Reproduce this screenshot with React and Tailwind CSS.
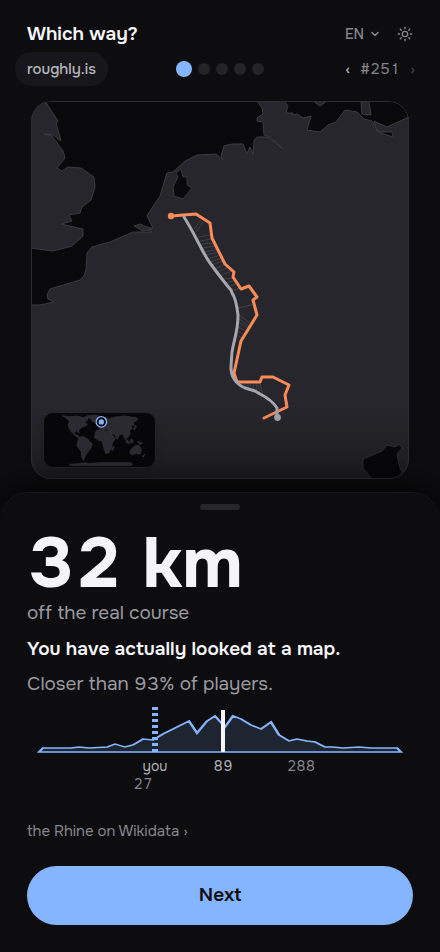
import React from 'react'
import { useState } from 'react'
import { ChevronDown, Sun } from 'lucide-react'


// land shapes of the main map, in map units (378 x 378)
const LAND = [
  // Great Britain
  "M0 0H14L27 20 25 22 30 40 22 34 13 33 21 35 32 50 34 57 26 67 31 70 37 66 50 67 63 76 64 86 60 99 51 106 49 112 38 114 41 120 30 123 52 128 52 135 41 145 22 150 0 147Z",
  // continent
  "M0 204L9 204 23 201 17 198 16 194 19 188 49 179 53 175 55 169 56 152 61 146 79 141 102 131 121 131 113 127 122 127 116 115 121 107 129 95 136 72 142 71 154 60 166 54 185 53 192 59 190 55 193 45 201 43 212 43 216 53 219 46 221 50 222 54 223 39 226 36 237 36 252 48 239 36 233 34 232 21 226 20 226 17 232 13 231 7 226 0H253L257 5 255 12 262 12 262 14 266 13 272 17 280 15 276 29 289 31 297 24 305 21 314 9 326 11 333 18 341 20 347 31 362 36 361 31 346 30 343 20 356 26 378 16V378H0Z",
  "M330 0H338L340 14 331 13Z",
  "M282 0H296L289 5Z",
]

const LAKES = [
  "M150 68L145 72 147 76 142 86 143 95 152 98 161 87 156 84 156 76 152 76Z",
  "M332 358L351 350 356 344 364 346 368 343 371 347 366 353 369 367 372 372 366 378H341L332 367Z",
  "M347 31L361 31 362 36Z",
]

const RIVER = "M153 116C164 133 171 151 179 162Q184 169 191 178T200 189L201 192Q205 197 207 214C207 231 203 238 201 251C200 265 199 270 202 276Q205 283 214 287L224 290 229 293Q241 299 246 307V317"
const GUESS = "M140 115L165 113 179 122 181 137 194 163 203 171 202 176 210 188 218 185 226 196 222 199 226 214 210 240 203 272 206 281 229 281 231 276H242L258 284 254 294 256 306 233 317"

// short lines between the guess and the real course
const GAPS = "M163 128L170 119M165 131L172 121M167 136L179 134M169 140L181 138M170 143L183 142M172 147L185 145M173 151L187 148M175 154L189 151M177 158L190 154M179 161L191 157M181 164L192 160M183 168L194 164M186 171L196 167M189 175L200 170M191 178L202 177M194 182L205 179M197 186L207 182M200 190L209 187M207 207L224 203M207 213L220 223M207 217L218 225M207 221L217 227M207 226L215 230M207 230L213 234M206 234L211 237M214 286V282M217 287V282M220 289L219 282M223 290L222 282M226 291L225 282M229 293L227 282M232 295L229 282"

const WORLD = [
  "M55 8L78 11 100 9 118 14 135 9 132 22 122 29 132 34 126 40 118 42 105 52 107 60 98 54 91 60 96 67 104 68 109 78 95 70 84 58 76 46 73 34 78 25 68 16Z",
  "M109 73L120 72 134 80 136 86 147 93 142 108 133 118 125 130 120 144 115 136 113 117 100 99 103 85Z",
  "M132 8L156 6 170 10 160 21 150 28 141 18Z",
  "M158 54L170 51 186 54 200 56 208 73 217 77 207 91 205 105 196 121 187 123 180 101 177 86 165 83 153 74Z",
  "M166 42L180 29 176 20 187 14 196 18 218 12 245 9 276 14 285 17 282 23 270 28 273 38 264 36 267 48 259 53 262 62 254 74 248 73 252 84 244 76 239 64 229 66 222 80 214 65 203 62 213 74 208 75 200 55 190 49 179 50 170 49Z",
  "M262 112L274 101 286 97 296 110 291 125 280 122 268 127 261 123Z",
  "M251 82L260 88 257 94 248 88ZM265 78L271 85 266 92 261 86ZM284 86L298 91 292 96ZM210 101L213 104 208 115 205 111ZM298 132L306 125 301 134ZM273 46L278 37 281 42 274 52Z",
  "M76 156L130 151 133 154 165 151 265 151 268 156 262 159H82Z",
]

// player distribution, [x, y] along the axis
const CURVE = [
  [6, 47], [8, 43], [22, 43], [26, 42], [31, 43], [40, 42], [44, 39], [49, 42], [53, 40], [58, 34],
  [63, 35], [68, 29], [81, 16], [85, 28], [90, 16], [94, 11], [99, 22], [103, 11], [107, 14],
  [112, 20], [117, 24], [122, 17], [126, 30], [131, 36], [135, 34], [140, 36], [144, 37],
  [149, 42], [153, 42], [158, 43], [166, 42], [172, 43], [185, 43], [187, 47],
]

const WorldInset = () => (
  <div className="absolute bottom-[11px] left-3 w-[30%] overflow-hidden rounded-[10px] border border-[#232328] bg-[#070709] shadow-lg">
    <svg viewBox="0 0 338 164" className="block w-full">
      {WORLD.map((d, index) => (
        <path key={index} d={d} fill="#2a2a30" stroke="#36363c" strokeWidth="2" />
      ))}
      <circle cx="174" cy="27" r="16" fill="#0d0d10" stroke="#85b5ff" strokeWidth="4" />
      <circle cx="174" cy="27" r="8" fill="#85b5ff" />
    </svg>
  </div>
)

const RiverMap = () => (
  <div className="relative mx-[31px] mt-[15px] overflow-hidden rounded-[20px] bg-[#09090b]">
    <svg viewBox="0 0 378 378" className="block w-full" role="img" aria-label="Map of the Rhine">
      <g fill="#26262c" stroke="#3b3b42" strokeWidth="1">
        {LAND.map((d) => <path key={d} d={d} />)}
        <path d="M103 125L109 123 121 128 112 130Z" />
      </g>
      <g fill="#09090b" stroke="#36363c" strokeWidth="1">
        {LAKES.map((d) => <path key={d} d={d} />)}
      </g>
      <path d={GAPS} stroke="#4a4a52" strokeWidth="1" fill="none" opacity="0.7" />
      <g fill="none" strokeLinecap="round" strokeLinejoin="round">
        <path d={GUESS} stroke="#fb8c58" strokeWidth="3" />
        <path d={RIVER} stroke="#a6a6af" strokeWidth="3" />
      </g>
      <circle cx="140" cy="115" r="3.2" fill="#fb8c58" />
      <circle cx="246.5" cy="316.5" r="3.4" fill="#a6a6af" />
    </svg>
    <div className="pointer-events-none absolute inset-0 rounded-[20px] border border-[#2e2e34] bg-linear-to-b from-transparent from-80% to-black/25" />
    <WorldInset />
  </div>
)

const Distribution = () => (
  <div>
    <svg viewBox="0 0 193 48" preserveAspectRatio="none" className="block h-12 w-full">
      <polygon
        points={CURVE.map((point) => point.join(',')).join(' ')}
        fill="#1e2530"
        stroke="#85b5ff"
        strokeWidth="1.4"
      />
      <line x1="64" x2="64" y1="2" y2="47" stroke="#85b5ff" strokeWidth="3" strokeDasharray="3 3" />
      <line x1="98" x2="98" y1="5" y2="47" stroke="#f5f5f8" strokeWidth="2" />
    </svg>
    {/* axis labels */}
    <div className="mt-1 grid grid-cols-[94fr_68fr_68fr_10fr_68fr_78fr] text-center text-sm leading-[18px] tabular-nums text-[#85858c]">
      <span className="col-start-2 text-[#b4b4ba]">you</span>
      <span className="col-start-3 text-[#b4b4ba]">89</span>
      <span className="col-start-5">288</span>
      <span className="col-start-2 pr-6">27</span>
    </div>
  </div>
)

const App = () => {
  const [lang, setLang] = useState('EN')

  return (
    <div className="flex min-h-screen flex-col bg-[#0d0d0f] font-['Onest','Inter',sans-serif] text-[#f5f5f8]">
      {/* header */}
      <header className="px-[27px] pt-4">
        <div className="flex h-9 items-center justify-between">
          <h1 className="text-[19px] font-semibold">Which way?</h1>
          <div className="flex items-center gap-4 text-[#85858c]">
            <div className="relative flex items-center">
              <select
                aria-label="Language"
                value={lang}
                onChange={(e) => setLang(e.target.value)}
                className="appearance-none bg-transparent pr-4 text-sm font-medium focus:outline-none"
              >
                <option>EN</option>
                <option>DE</option>
              </select>
              <ChevronDown className="pointer-events-none absolute right-0 size-3" strokeWidth={3} />
            </div>
            <button type="button" aria-label="Light theme">
              <Sun className="size-4" strokeWidth={2} />
            </button>
          </div>
        </div>

        <div className="grid grid-cols-[1fr_auto_1fr] items-center">
          <a href="#home" className="-ml-3 flex h-[34px] items-center justify-self-start rounded-full bg-[#17171b] px-3 text-[15px] font-medium text-[#b4b4ba]">
            roughly.is
          </a>
          <div className="flex items-center gap-1.5">
            <span className="size-4 rounded-full bg-[#85b5ff]" />
            {[2, 3, 4, 5].map((round) => (
              <span key={round} className="size-3 rounded-full bg-[#232328]" />
            ))}
          </div>
          <div className="-mr-0.5 flex items-center gap-2.5 justify-self-end text-[15px] text-[#85858c]">
            <button type="button" aria-label="Previous puzzle" className="font-medium text-[#b4b4ba]">‹</button>
            <span className="tabular-nums">#251</span>
            <button type="button" aria-label="Next puzzle" className="font-medium text-[#3b3b42]">›</button>
          </div>
        </div>
      </header>

      <RiverMap />

      {/* result sheet */}
      <main className="relative mt-[13px] flex grow flex-col rounded-t-[28px] border-t border-[#18181b] bg-[#0d0d0f] px-[27px] pb-[27px] shadow-[0_-8px_30px_#000000b3]">
        <div className="mx-auto mt-[11px] h-1.5 w-10 rounded-full bg-[#26262b]" />
        <p className="mt-4 text-[71px] leading-[75px] font-bold tabular-nums">32 km</p>
        <p className="text-[19px] leading-6 text-[#9a9aa0]">off the real course</p>
        <p className="mt-3 text-[19px] leading-6 font-semibold">You have actually looked at a map.</p>
        <p className="mt-[11px] mb-[9px] text-[19px] leading-6 tabular-nums text-[#9a9aa0]">Closer than 93% of players.</p>
        <Distribution />
        <a href="#wikidata" className="mt-auto mb-[26px] self-start text-[15px] leading-[18px] text-[#85858c]">
          the Rhine on Wikidata ›
        </a>
        <button type="button" className="h-[59px] w-full rounded-full bg-[#85b5ff] text-[19px] font-semibold text-[#0d0d0f]">
          Next
        </button>
      </main>
    </div>
  )
}

export default App
